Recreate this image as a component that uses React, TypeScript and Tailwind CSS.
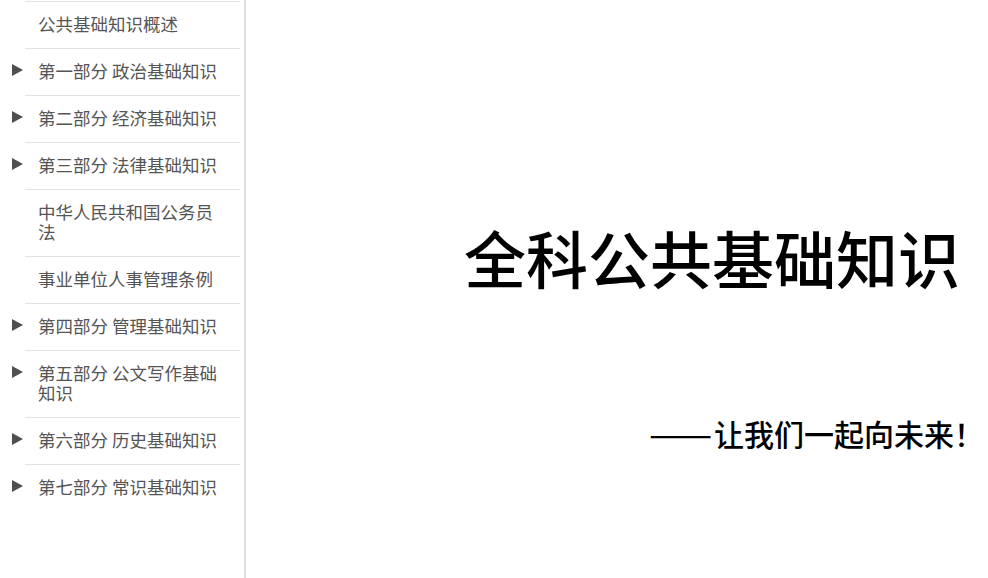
const items = [
  { title: '公共基础知识概述', arrow: false },
  { title: '第一部分 政治基础知识', arrow: true },
  { title: '第二部分 经济基础知识', arrow: true },
  { title: '第三部分 法律基础知识', arrow: true },
  { title: '中华人民共和国公务员法', arrow: false },
  { title: '事业单位人事管理条例', arrow: false },
  { title: '第四部分 管理基础知识', arrow: true },
  { title: '第五部分 公文写作基础知识', arrow: true },
  { title: '第六部分 历史基础知识', arrow: true },
  { title: '第七部分 常识基础知识', arrow: true },
]

const font = { fontFamily: '"Noto Sans CJK SC", "Noto Sans", sans-serif' }

function Arrow() {
  return (
    <svg width="11" height="12" viewBox="0 0 11 12" className="block">
      <polygon points="0,0 11,6 0,12" fill="#4f4f4f" />
    </svg>
  )
}

export default function App() {
  return (
    <div className="flex h-[578px] w-[988px] overflow-hidden bg-white" style={font}>
      {/* Sidebar */}
      <aside className="w-[246px] shrink-0 border-r-2 border-[#dedede] pt-[1px]">
        <ul>
          {items.map((item) => (
            <li key={item.title} className="flex">
              <div className="w-[25px] shrink-0 pl-[12px] pt-[16px]">
                {item.arrow && <Arrow />}
              </div>
              <div className="mr-[4px] flex-1 border-t border-[#e3e3e3] pt-[12px] pb-[14px] pl-[13px] pr-[16px] text-[17.5px] leading-[20px] text-[#555]">
                {item.title}
              </div>
            </li>
          ))}
        </ul>
      </aside>

      {/* Main */}
      <main className="flex flex-1 flex-col pt-[226px]">
        <h1 className="ml-[218px] whitespace-nowrap text-[62px] font-medium leading-none text-black">
          全科公共基础知识
        </h1>
        <p className="mt-[130px] whitespace-nowrap pr-[4px] text-right text-[30px] font-medium leading-none text-black">
          <span className="inline-block w-[65px] origin-left scale-x-[1.25] text-left">——</span>
          让我们一起向未来！
        </p>
      </main>
    </div>
  )
}
